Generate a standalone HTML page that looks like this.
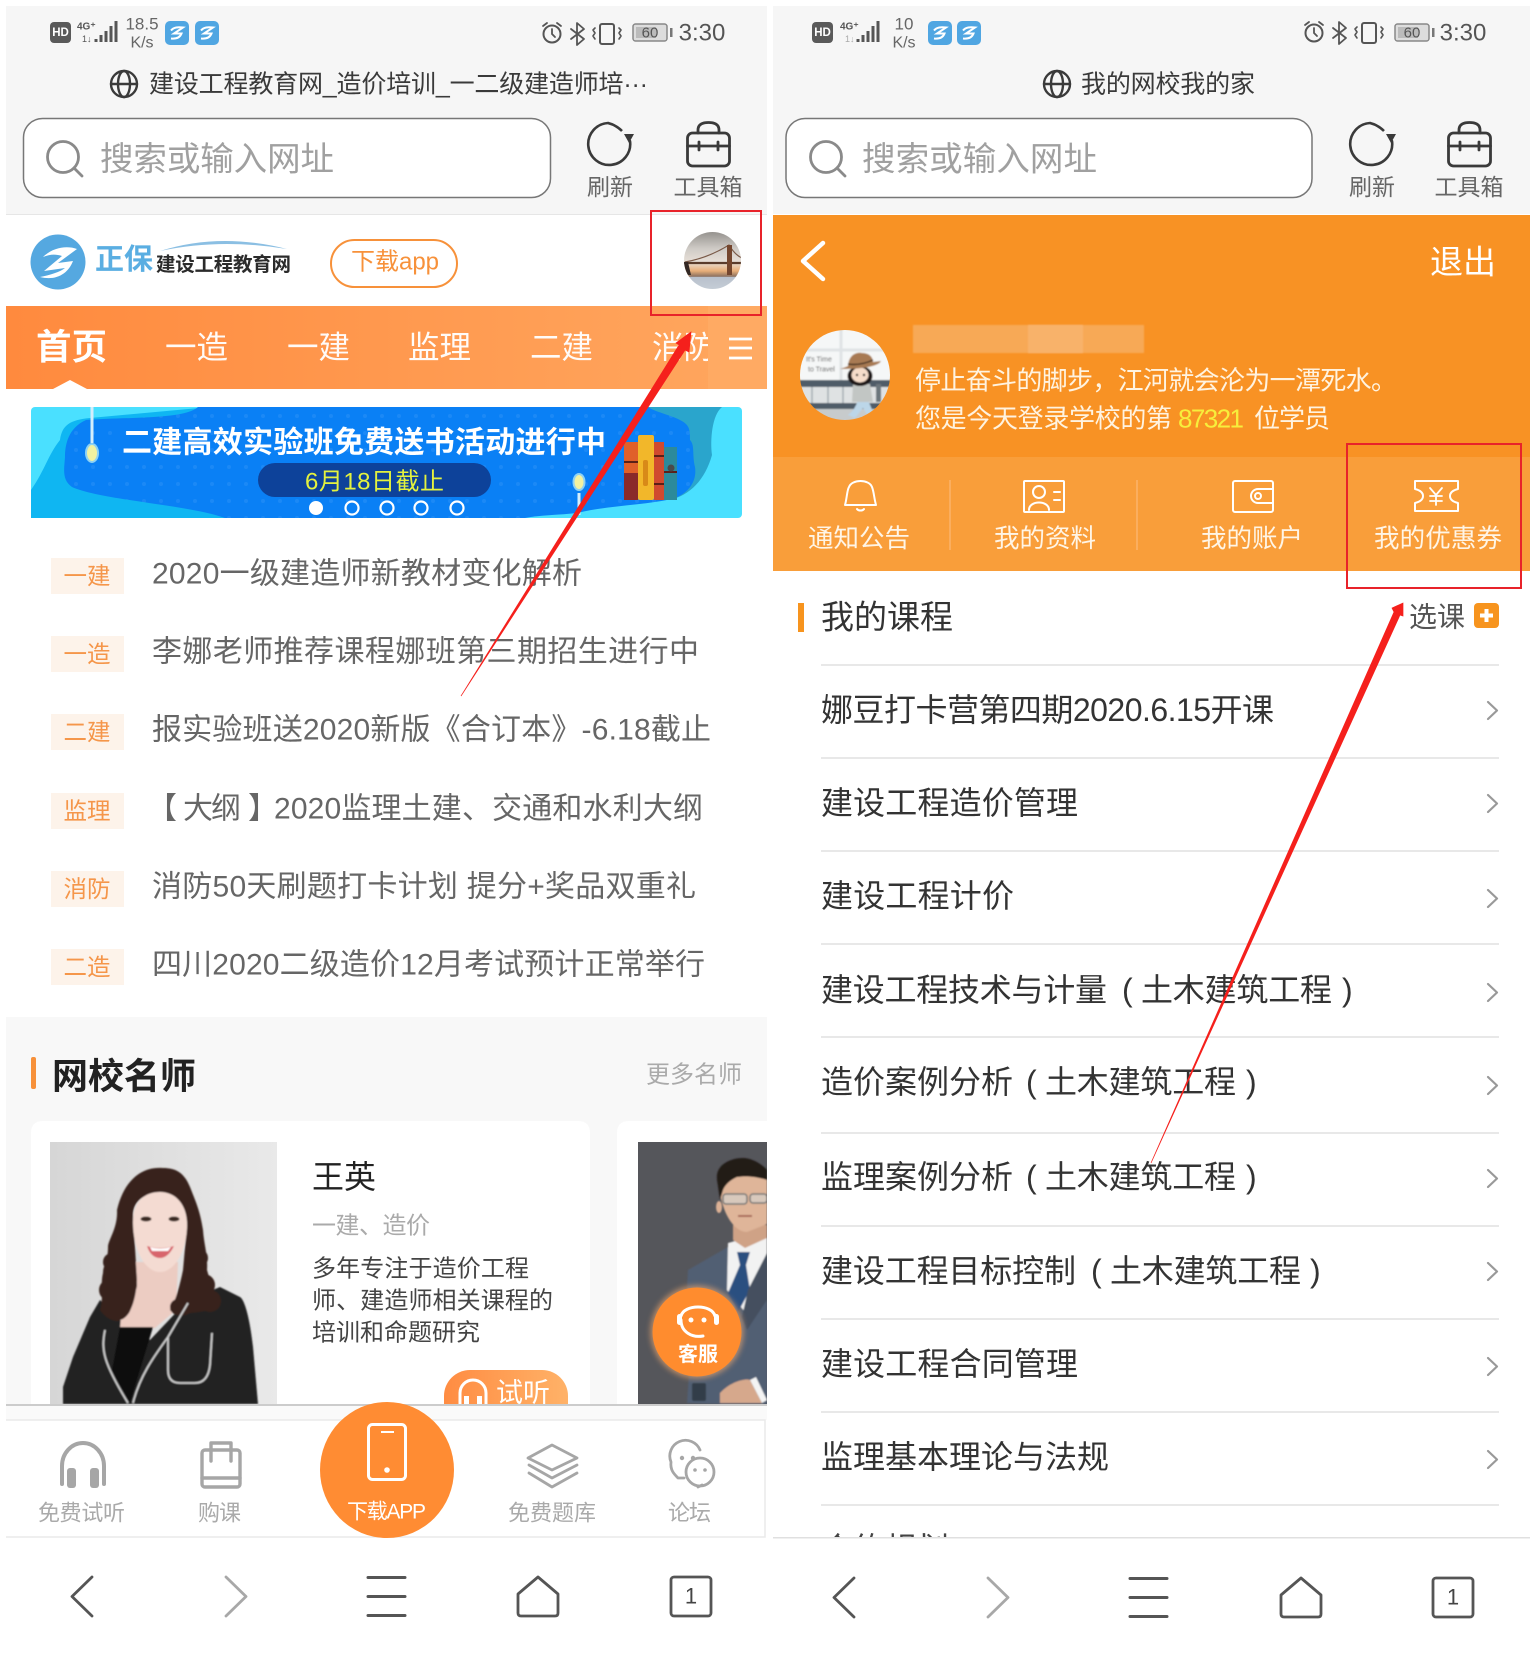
<!DOCTYPE html>
<html lang="zh-CN"><head><meta charset="utf-8"><title>建设工程教育网</title>
<style>
html,body{margin:0;padding:0;background:#fff;width:1536px;height:1663px;overflow:hidden}
svg{display:block}
text{font-family:"Liberation Sans","Noto Sans CJK SC",sans-serif;dominant-baseline:central;transform:translateY(1px)}
.c{text-anchor:middle}.b{font-weight:700}
.s{fill:none;stroke-linecap:round;stroke-linejoin:round}
</style></head><body>
<svg width="1536" height="1663" viewBox="0 0 1536 1663" xmlns="http://www.w3.org/2000/svg">
<defs>
<linearGradient id="nav" x1="0" x2="1"><stop offset="0" stop-color="#ff8a3e"/><stop offset="1" stop-color="#ffa75f"/></linearGradient>
<linearGradient id="ph" x1="0" x2="1"><stop offset="0" stop-color="#d6d6d6"/><stop offset="1" stop-color="#e9e9e9"/></linearGradient>
<linearGradient id="try" x1="0" x2="1"><stop offset="0" stop-color="#ff8c42"/><stop offset="1" stop-color="#ffb268"/></linearGradient>
<linearGradient id="sky" x1="0" x2="0" y1="0" y2="1"><stop offset="0" stop-color="#8f8c88"/><stop offset=".3" stop-color="#cfcbc6"/><stop offset=".52" stop-color="#e8e0d8"/><stop offset=".66" stop-color="#e8ae78"/><stop offset=".75" stop-color="#8a7060"/><stop offset=".76" stop-color="#b8c0cc"/><stop offset="1" stop-color="#c8d0d8"/></linearGradient>
<pattern id="dots" width="17" height="17" patternUnits="userSpaceOnUse"><circle cx="8" cy="8" r="2" fill="#fff" opacity=".07"/></pattern>
<clipPath id="pw"><rect x="51" y="1142" width="226" height="262"/></clipPath>
<clipPath id="pm"><rect x="638" y="1142" width="129" height="262"/></clipPath>
<clipPath id="av1"><circle cx="712.500" cy="260.500" r="28.500"/></clipPath>
<clipPath id="av2"><circle cx="845" cy="375" r="45"/></clipPath>
<clipPath id="rb"><rect x="773" y="1400" width="757" height="137"/></clipPath>
<clipPath id="tb"><rect x="444" y="1370" width="124" height="34"/></clipPath>
<filter id="bl"><feGaussianBlur stdDeviation=".8"/></filter>
<filter id="bl3"><feGaussianBlur stdDeviation="3"/></filter>

<g id="hd"><rect x="0" y="0" width="21" height="21" rx="4" fill="#5a5a5a"/></g>
<g id="sq"><rect width="24" height="24" rx="5" fill="#50a6e2"/><path d="M6 9.500C9 6 13 6 18 6.500L9 12.500H16.500C15 16.500 11 18 6 17.500" fill="none" stroke="#fff" stroke-width="2"/></g>
<g id="stat-r" class="s" stroke="#555">
<circle cx="11" cy="12" r="8.500" stroke-width="2"/><path d="M11 7v5l3 3M2 4l4-3M20 4l-4-3" stroke-width="1.800"/>
<path d="M30 7L43 17 36 23V1L43 7 30 17" stroke-width="1.800"/>
<rect x="59" y="2" width="14" height="20" rx="2" stroke-width="2"/><path d="M54 6l-2 2 2 3-2 3 2 3M78 6l2 2-2 3 2 3-2 3" stroke-width="1.600"/>
</g>
<g id="refresh"><path d="M20 7A21 21 0 1 0 42 25" class="s" fill="none" stroke="#3a3a3a" stroke-width="2.600"/><path d="M20 7q8 2 14 8" fill="none" stroke="#3a3a3a" stroke-width="2.600"/><path d="M36 18h10l-5 9z" fill="#3a3a3a"/></g>
<g id="box" class="s" stroke="#3a3a3a" stroke-width="2.800"><rect x="1.500" y="12" width="42" height="33" rx="5"/><path d="M12 12V9C12 3 17 1.500 22.500 1.500S33 3 33 9V12M1.500 25H43.500M13 21V29M32 21V29"/></g>
<g id="mag" class="s" stroke="#8a8a8a" stroke-width="2.800"><circle cx="16" cy="17" r="15.500"/><path d="M27 28l8 8"/></g>
<g id="globe" class="s" stroke="#3a3a3a" stroke-width="2.400"><circle cx="14" cy="14" r="13"/><ellipse cx="14" cy="14" rx="6" ry="13"/><path d="M1 14H27"/></g>
<g id="nback" class="s" stroke="#555" stroke-width="2.800"><path d="M21 1L1 20.500 21 40"/></g>
<g id="nfwd" class="s" stroke="#a8a8a8" stroke-width="2.800"><path d="M1 1L21 20.500 1 40"/></g>
<g id="nmenu" class="s" stroke="#555" stroke-width="3"><path d="M1 1.500H38M1 20.500H38M1 39.500H38"/></g>
<g id="nhome" class="s" stroke="#555" stroke-width="2.800"><path d="M21 1L41 18V37Q41 40 38 40H4Q1 40 1 37V18Z"/></g>
<g id="ntab" class="s" stroke="#555" stroke-width="2.800"><rect x="1" y="1" width="40" height="39" rx="3"/></g>
<g id="chev" class="s" stroke="#999" stroke-width="2.200"><path d="M1 2L10 10.500 1 19"/></g>
</defs>

<!-- LEFT PANEL -->
<rect x="6" y="6" width="761" height="208" fill="#f6f6f6"/>
<rect x="6" y="214" width="761" height="1" fill="#e6e6e6"/>
<use href="#hd" x="50" y="22"/><text x="60.500" y="32" class="c b" font-size="11.500" fill="#fff">HD</text>
<text x="77" y="26" font-size="10" fill="#555" font-weight="700">4G⁺</text>
<text x="82" y="38" font-size="9" fill="#555">1↓</text>
<path d="M96 42V39M101 42V35M106 42V31M111 42V26M116 42V21" stroke="#555" stroke-width="3"/>
<text x="142" y="23" class="c" font-size="17" fill="#666">18.5</text>
<text x="142" y="42" class="c" font-size="16" fill="#666">K/s</text>
<use href="#sq" x="165" y="21"/><use href="#sq" x="195" y="21"/>
<use href="#stat-r" x="541" y="22"/>
<rect x="633" y="24" width="34" height="17" rx="2.500" fill="#ddd" stroke="#888" stroke-width="1.500"/><rect x="636" y="27" width="20" height="11" fill="#bbb"/><rect x="670" y="28" width="2.500" height="9" fill="#777"/>
<text x="650" y="32" class="c" font-size="15" fill="#555">60</text>
<text x="702" y="32" class="c" font-size="24" fill="#555">3:30</text>

<use href="#globe" x="110" y="70"/>
<text x="149" y="83.500" font-size="25" fill="#3a3a3a" textLength="499">建设工程教育网_造价培训_一二级建造师培···</text>
<rect x="23.500" y="118.500" width="527" height="79" rx="19" fill="#fff" stroke="#777" stroke-width="1.500"/>
<use href="#mag" x="47" y="140"/>
<text x="100" y="159" font-size="33.500" fill="#a0a0a0" textLength="234">搜索或输入网址</text>
<use href="#refresh" x="588" y="116"/>
<text x="610" y="186" class="c" font-size="23" fill="#666">刷新</text>
<use href="#box" x="686" y="121"/>
<text x="708" y="186" class="c" font-size="23" fill="#666">工具箱</text>

<!-- logo -->
<circle cx="58" cy="262" r="27.500" fill="#55a8e0"/>
<path d="M43 257C52 248 66 245 77 249L58 263 73 261C68 274 56 281 40 277 50 275 60 272 65 268L44 271 62 256C56 254 50 254 43 257Z" fill="#fff"/>
<text x="95" y="259" class="b" font-size="29" fill="#5aaee2">正保</text>
<path d="M160 251Q220 232 287 249Q220 238 160 251Z" fill="#8bbfe3"/>
<text x="156" y="264" class="b" font-size="19.500" fill="#2b2b2b" textLength="135">建设工程教育网</text>
<rect x="331" y="240" width="126" height="47" rx="23.500" fill="#fff" stroke="#f7913a" stroke-width="2"/>
<text x="395" y="261" class="c" font-size="24" fill="#f7913a">下载app</text>

<!-- bridge avatar -->
<g clip-path="url(#av1)">
<rect x="680" y="230" width="66" height="62" fill="url(#sky)"/>
<path d="M685 262Q708 258 729 245Q735 255 742 258" fill="none" stroke="#7a5a48" stroke-width="1.200"/>
<path d="M684 263H742" stroke="#5a3c2c" stroke-width="2.200"/>
<rect x="727" y="245" width="5" height="30" fill="#74462e"/>
<path d="M684 262h4l3 13h-7z" fill="#332824"/>
</g>

<!-- nav -->
<rect x="6" y="306" width="761" height="83" fill="url(#nav)"/>
<path d="M53 389L70 380 87 389Z" fill="#fff"/>
<text x="36" y="346" class="b" font-size="35.500" fill="#fff">首页</text>
<g font-size="31.500" fill="#fff" opacity=".96">
<text x="165" y="346">一造</text><text x="287" y="346">一建</text><text x="408" y="346">监理</text><text x="530" y="346">二建</text><text x="652" y="346">消防</text>
</g>
<rect x="708" y="306" width="59" height="83" fill="#ffaa63"/>
<path d="M729 339H752M729 348H752M729 358H752" stroke="#fff" stroke-width="2.800"/>

<!-- banner -->
<rect x="31" y="407" width="711" height="111" rx="4" fill="#4ae0ff"/>
<path d="M31 518V490C45 470 48 455 60 440 62 425 70 420 90 418L210 407 240 518Z" fill="#0fb6f2"/>
<path d="M640 407H722C712 415 710 440 712 455 705 480 690 495 670 500H640Z" fill="#2aa5cc"/>
<path d="M198 407C185 420 120 417 86 420 68 428 65 445 65 457 64 470 62 480 72 487 100 500 190 505 225 518H525C540 515 560 515 577 513 610 505 650 505 675 498 690 492 697 480 695 467 692 455 695 445 690 440 690 430 690 425 680 420 668 414 655 412 648 407Z" fill="#0a80f5"/>
<path d="M198 407C185 420 120 417 86 420 68 428 65 445 65 457 64 470 62 480 72 487 100 500 190 505 225 518H525C540 515 560 515 577 513 610 505 650 505 675 498 690 492 697 480 695 467 692 455 695 445 690 440 690 430 690 425 680 420 668 414 655 412 648 407Z" fill="url(#dots)"/>
<rect x="258" y="463" width="233" height="34" rx="17" fill="#0d429a"/>
<path d="M92 407V443" stroke="#d4eefc" stroke-width="3"/><ellipse cx="92" cy="453" rx="6" ry="9" fill="#f2f2a0" stroke="#8ed2f4" stroke-width="2"/>
<path d="M579 493V515" stroke="#d4eefc" stroke-width="3"/><ellipse cx="579" cy="482" rx="5.500" ry="8" fill="#f2f2a0" stroke="#8ed2f4" stroke-width="2"/>
<text x="122" y="442" class="b" font-size="30" fill="#fff" textLength="484">二建高效实验班免费送书活动进行中</text>
<text x="305" y="481" font-size="24" fill="#e4f23e" textLength="139">6月18日截止</text>
<circle cx="316" cy="508" r="7" fill="#fff"/>
<g fill="none" stroke="#fff" stroke-width="2.200"><circle cx="352" cy="508" r="6.500"/><circle cx="387" cy="508" r="6.500"/><circle cx="421" cy="508" r="6.500"/><circle cx="457" cy="508" r="6.500"/></g>
<rect x="624" y="442" width="14" height="31" fill="#e0602a"/><rect x="624" y="473" width="14" height="27" fill="#8a2a2a"/><rect x="638" y="435" width="16" height="65" rx="2" fill="#f2b72a"/><rect x="654" y="442" width="10" height="58" fill="#d04a2f"/><rect x="664" y="447" width="13" height="53" fill="#2c8a9a"/>
<path d="M624 462H638M654 456H664M654 484H664M664 472H677" stroke="#5a2018" stroke-width="2"/><rect x="643" y="460" width="5" height="26" rx="2" fill="#d88a18"/><circle cx="671" cy="468" r="3.500" fill="#4a4a4a"/>

<!-- list -->
<g fill="#fdf3ea"><rect x="51" y="558" width="73" height="36"/><rect x="51" y="636" width="73" height="36"/><rect x="51" y="714" width="73" height="36"/><rect x="51" y="793" width="73" height="36"/><rect x="51" y="871" width="73" height="36"/><rect x="51" y="949" width="73" height="36"/></g>
<g font-size="23.500" fill="#f5964a" class="c">
<text x="87" y="575">一建</text><text x="87" y="653">一造</text><text x="87" y="731">二建</text><text x="87" y="810">监理</text><text x="87" y="888">消防</text><text x="87" y="966">二造</text>
</g>
<g font-size="30" fill="#666">
<text x="152" y="573" textLength="430">2020一级建造师新教材变化解析</text>
<text x="152" y="651" textLength="547">李娜老师推荐课程娜班第三期招生进行中</text>
<text x="152" y="729" textLength="559">报实验班送2020新版《合订本》-6.18截止</text>
<text x="147" y="808">【</text><text x="183" y="808" textLength="58">大纲</text><text x="248" y="808">】</text><text x="274" y="808" textLength="429">2020监理土建、交通和水利大纲</text>
<text x="152" y="886" textLength="544">消防50天刷题打卡计划 提分+奖品双重礼</text>
<text x="152" y="964" textLength="553">四川2020二级造价12月考试预计正常举行</text>
</g>

<!-- teachers -->
<rect x="6" y="1017" width="761" height="388" fill="#f8f8f8"/>
<rect x="31" y="1057" width="5" height="32" rx="2" fill="#f7913a"/>
<text x="52" y="1075" class="b" font-size="36" fill="#222">网校名师</text>
<text x="742" y="1074" text-anchor="end" font-size="24" fill="#aaa">更多名师</text>
<path d="M31 1404V1133Q31 1121 43 1121H578Q590 1121 590 1133V1404Z" fill="#fff"/>
<path d="M617 1404V1133Q617 1121 629 1121H767V1404Z" fill="#fff"/>

<rect x="50" y="1142" width="227" height="262" fill="url(#ph)"/>
<g clip-path="url(#pw)" filter="url(#bl)">
<path d="M100 1300L90 1317 73 1357 63 1387V1404H258L253 1347C250 1320 245 1300 240 1297L220 1287 188 1300 150 1340 120 1320Z" fill="#212121"/>
<path d="M126 1262H178L176 1310 155 1328H120Z" fill="#ecccc2"/>
<path d="M120 1327H153L130 1403 112 1370Z" fill="#0e0e0e"/>
<path d="M163 1168C142 1166 124 1180 117 1210 118 1228 108 1240 108 1247 108 1262 103 1265 103 1273 100 1285 104 1298 100 1310 108 1322 120 1322 120 1320 130 1318 136 1300 137 1280L133 1215C133 1200 146 1193 160 1193 176 1193 187 1205 187 1225L183 1270C180 1285 176 1300 170 1310 178 1318 185 1316 190 1313 205 1312 222 1308 220 1300 212 1290 210 1280 207 1270 208 1255 204 1245 203 1230 200 1210 195 1200 190 1187 184 1172 175 1168 163 1168Z" fill="#38241e"/>
<g fill="#38241e"><circle cx="112" cy="1262" r="9"/><circle cx="110" cy="1290" r="11"/><circle cx="118" cy="1306" r="13"/><circle cx="126" cy="1285" r="11"/><circle cx="199" cy="1258" r="9"/><circle cx="204" cy="1285" r="11"/><circle cx="210" cy="1301" r="11"/><circle cx="190" cy="1296" r="12"/><circle cx="178" cy="1307" r="8"/></g>
<path d="M133 1222C133 1200 146 1192 160 1192 176 1192 187 1205 187 1225 187 1250 175 1272 160 1272 145 1272 133 1250 133 1222Z" fill="#f4dbd2"/>
<ellipse cx="146" cy="1219" rx="5.500" ry="2.500" fill="#3a2a24"/><ellipse cx="174" cy="1219" rx="5.500" ry="2.500" fill="#3a2a24"/>
<path d="M147 1246Q160 1250 174 1246Q168 1258 160 1258 151 1258 147 1246Z" fill="#d8656c"/><path d="M150 1247Q160 1250 171 1247L168 1251H152Z" fill="#fff"/>
<path d="M105 1330C101 1350 103 1362 128 1403M188 1303L168 1337C155 1355 140 1375 133 1403M168 1337V1370Q168 1383 180 1383H195Q208 1383 210 1365L212 1333" fill="none" stroke="#cfcfcf" stroke-width="1.800"/>
</g>

<text x="312" y="1176" font-size="32" fill="#222">王英</text>
<text x="312" y="1225" font-size="24" fill="#aaa" textLength="118">一建、造价</text>
<g font-size="24" fill="#444">
<text x="312" y="1268" textLength="217">多年专注于造价工程</text>
<text x="312" y="1300" textLength="241">师、建造师相关课程的</text>
<text x="312" y="1332" textLength="168">培训和命题研究</text>
</g>
<g clip-path="url(#tb)">
<rect x="444" y="1370" width="124" height="60" rx="26" fill="url(#try)"/>
<path d="M460 1404V1393A13 13 0 0 1 486 1393V1404" fill="none" stroke="#fff" stroke-width="3"/><rect x="464" y="1396" width="5" height="10" fill="#fff"/><rect x="477" y="1396" width="5" height="10" fill="#fff"/>
<text x="496" y="1392" font-size="27" fill="#fff">试听</text>
</g>

<rect x="638" y="1142" width="129" height="262" fill="#55565b"/>
<g clip-path="url(#pm)" filter="url(#bl)">
<path d="M688 1270L728 1247 767 1237V1404H717L687 1403 692 1330 687 1287Z" fill="#515f73"/>
<path d="M728 1243L767 1232V1275L745 1312 727 1290Z" fill="#f2f2f2"/>
<path d="M737 1252H750L746 1265 750 1290 738 1312 728 1293 740 1265Z" fill="#2c4f80"/>
<path d="M767 1253L748 1290 742 1317 747 1330 767 1300Z" fill="#444f5f"/>
<path d="M733 1225H767V1238L745 1248 733 1240Z" fill="#cfa286"/>
<ellipse cx="719" cy="1207" rx="3" ry="6" fill="#dcb195"/>
<path d="M719 1182C719 1170 750 1168 767 1170V1224L747 1232C733 1232 720 1210 719 1182Z" fill="#dfb599"/>
<path d="M717 1180C715 1165 730 1158 743 1158 752 1158 762 1164 767 1170V1180C755 1176 745 1176 737 1177 730 1180 725 1185 723 1190L720 1200Z" fill="#211a19"/>
<rect x="723" y="1194" width="24" height="10" rx="3" fill="#d8c9bc" stroke="#777" stroke-width="1.500"/><rect x="750" y="1194" width="17" height="9" rx="3" fill="#d8c9bc" stroke="#777" stroke-width="1.500"/>
<path d="M738 1216H752" stroke="#a86a58" stroke-width="2"/>
<path d="M720 1393C730 1382 745 1378 750 1380L762 1403H720Z" fill="#d6a88c"/>
<path d="M750 1380L756 1377 767 1400 762 1403Z" fill="#f4f4f4"/>
<rect x="692" y="1383" width="14" height="18" rx="2" fill="#333d4a"/>
</g>
<circle cx="697" cy="1332" r="46.500" fill="#ffb070" opacity=".6" filter="url(#bl3)"/>
<circle cx="697" cy="1332" r="44.500" fill="#ff8c2e"/>
<g class="s" stroke="#fff" stroke-width="3"><path d="M681 1316C684 1304 712 1304 715 1316"/><path d="M681 1320C681 1332 692 1338 703 1336"/></g>
<rect x="677" y="1314" width="5" height="11" rx="2.500" fill="#fff"/><rect x="714" y="1314" width="5" height="11" rx="2.500" fill="#fff"/>
<circle cx="691" cy="1320" r="2.500" fill="#fff"/><circle cx="704" cy="1320" r="2.500" fill="#fff"/>
<text x="678" y="1354" class="b" font-size="20" fill="#fff" textLength="40">客服</text>

<!-- left tab -->
<rect x="6" y="1404" width="761" height="2" fill="#ccc"/>
<rect x="6" y="1406" width="761" height="14" fill="#fafafa"/>
<rect x="6" y="1420" width="759" height="117" fill="#fff"/>
<path d="M6 1420H765V1537H6" fill="none" stroke="#eaeaea" stroke-width="1.500"/>
<ellipse cx="387" cy="1470" rx="67" ry="68" fill="#ff8c33"/>
<rect x="368.500" y="1424.500" width="37" height="55" rx="4" fill="none" stroke="#fff" stroke-width="3"/><path d="M381 1432H394" stroke="#fff" stroke-width="2"/><circle cx="387" cy="1470" r="2.800" fill="#fff"/>
<text x="347" y="1511" font-size="21" fill="#fff" textLength="79">下载APP</text>
<g class="s" stroke="#a6a6a6" stroke-width="4"><path d="M62 1484V1466A21 23 0 0 1 104 1466V1484"/></g>
<rect x="67" y="1468" width="9" height="20" rx="3" fill="#a6a6a6"/><rect x="90" y="1468" width="9" height="20" rx="3" fill="#a6a6a6"/>
<g class="s" stroke="#a6a6a6" stroke-width="3.400"><rect x="202" y="1450" width="38" height="37" rx="3"/><path d="M211 1461V1443H231V1461M202 1478H240"/></g>
<g class="s" stroke="#a6a6a6" stroke-width="2.800"><path d="M552 1445L577 1458 552 1470 528 1458Z"/><path d="M529 1465L552 1478 577 1465M529 1473L552 1487 577 1473"/></g>
<g class="s" stroke="#a6a6a6" stroke-width="2.800"><path d="M700 1450A15 15 0 0 0 671 1462C670 1470 674 1474 678 1478L684 1478"/><circle cx="700" cy="1472" r="14"/><path d="M698 1487l4-2"/></g>
<g fill="#a6a6a6"><circle cx="682" cy="1458" r="2.200"/><circle cx="693" cy="1458" r="2.200"/><circle cx="695" cy="1470" r="1.800"/><circle cx="705" cy="1470" r="1.800"/></g>
<g font-size="22" fill="#aaa">
<text x="38" y="1512" textLength="87">免费试听</text><text x="198" y="1512" textLength="43">购课</text><text x="508" y="1512" textLength="88">免费题库</text><text x="668" y="1512" textLength="43">论坛</text>
</g>
<use href="#nback" x="71" y="1576"/><use href="#nfwd" x="225" y="1576"/><use href="#nmenu" x="367" y="1576"/><use href="#nhome" x="517" y="1576"/><use href="#ntab" x="670" y="1576"/>
<text x="691" y="1595" class="c" font-size="22" fill="#444">1</text>

<!-- RIGHT PANEL -->
<rect x="773" y="6" width="757" height="208" fill="#f6f6f6"/>
<use href="#hd" x="812" y="22"/><text x="822.500" y="32" class="c b" font-size="11.500" fill="#fff">HD</text>
<text x="840" y="26" font-size="10" fill="#555" font-weight="700">4G⁺</text>
<text x="845" y="38" font-size="9" fill="#aaa">1↓</text>
<path d="M858 42V39M863 42V35M868 42V31M873 42V26M878 42V21" stroke="#555" stroke-width="3"/>
<text x="904" y="23" class="c" font-size="17" fill="#666">10</text>
<text x="904" y="42" class="c" font-size="16" fill="#666">K/s</text>
<use href="#sq" x="928" y="21"/><use href="#sq" x="957" y="21"/>
<use href="#stat-r" x="1303" y="21"/>
<rect x="1395" y="24" width="34" height="17" rx="2.500" fill="#ddd" stroke="#888" stroke-width="1.500"/><rect x="1398" y="27" width="20" height="11" fill="#bbb"/><rect x="1432" y="28" width="2.500" height="9" fill="#777"/>
<text x="1412" y="32" class="c" font-size="15" fill="#555">60</text>
<text x="1463" y="32" class="c" font-size="24" fill="#555">3:30</text>
<use href="#globe" x="1043" y="70"/>
<text x="1081" y="83.500" font-size="25" fill="#3a3a3a" textLength="174">我的网校我的家</text>
<rect x="786" y="118.500" width="526" height="79" rx="19" fill="#fff" stroke="#777" stroke-width="1.500"/>
<use href="#mag" x="810" y="140"/>
<text x="862" y="159" font-size="33.500" fill="#a0a0a0" textLength="235">搜索或输入网址</text>
<use href="#refresh" x="1350" y="116"/>
<text x="1372" y="186" class="c" font-size="23" fill="#666">刷新</text>
<use href="#box" x="1447" y="121"/>
<text x="1469" y="186" class="c" font-size="23" fill="#666">工具箱</text>

<rect x="773" y="215" width="757" height="242" fill="#f89224"/>
<rect x="773" y="457" width="757" height="114" fill="#f99e3a"/>
<path d="M823 243L803 261 823 279" class="s" stroke="#fff" stroke-width="4.500"/>
<text x="1463" y="261" class="c" font-size="33" fill="#fff">退出</text>
<rect x="913" y="325" width="231" height="28" fill="#f7a957" filter="url(#bl)"/><rect x="1028" y="325" width="55" height="28" fill="#f8b26a" filter="url(#bl)"/>

<g clip-path="url(#av2)" filter="url(#bl)">
<rect x="798" y="328" width="94" height="94" fill="#f5f7f7"/>
<path d="M841 329V380M800 350H892" stroke="#dfe3e5" stroke-width="3"/>
<rect x="798" y="380" width="94" height="7" fill="#4f5c68"/>
<rect x="798" y="387" width="94" height="16" fill="#dfe2e3"/>
<path d="M812 387V403M828 387V403M843 387V403" stroke="#a6adb2" stroke-width="1.500"/>
<rect x="798" y="403" width="94" height="6" fill="#4f5c68"/>
<rect x="798" y="409" width="94" height="13" fill="#c7cbcc"/>
<path d="M876 384h5v18h-5z" fill="#6a747c"/>
<path d="M858 400Q855 410 848 415L855 418 863 408 868 416 873 412 868 400Z" fill="#bcd6e8"/>
<path d="M853 384H870L873 402H852Z" fill="#c2c6c4"/>
<ellipse cx="860" cy="376" rx="12.500" ry="10" fill="#1d1818"/>
<ellipse cx="860" cy="375" rx="8.500" ry="7.500" fill="#f6ddca"/>
<path d="M848 366C849 354 857 352 862 353 870 353 873 358 873 362L881 361C878 367 860 369 840 369 843 368 846 367 848 366Z" fill="#a87a52"/>
<path d="M848 364Q860 366 873 360" stroke="#443020" stroke-width="1.500" fill="none"/>
<circle cx="857" cy="375" r="1.200" fill="#222"/><circle cx="864" cy="375" r="1.200" fill="#222"/>
<text x="806" y="359" font-size="7" fill="#555">It's Time</text><text x="808" y="369" font-size="7" fill="#555">to Travel</text>
</g>

<text x="915" y="379.500" font-size="26" fill="#fff3e0" textLength="482">停止奋斗的脚步，江河就会沦为一潭死水。</text>
<text x="915" y="417.500" font-size="26" fill="#fff3e0" textLength="257">您是今天登录学校的第</text>
<text x="1178" y="417.500" font-size="26" fill="#f7ee3c" textLength="66">87321</text>
<text x="1254" y="417.500" font-size="26" fill="#fff3e0" textLength="76">位学员</text>
<g class="s" stroke="#fff" stroke-width="2"><path d="M845 505C847 498 847 490 849 487 852 479 869 479 872 487 874 492 874 498 876 505ZM845 505H876M857 509A4 3 0 0 0 864 509"/>
<rect x="1024" y="481" width="40" height="31" rx="1"/><circle cx="1039" cy="492" r="6"/><path d="M1029 510C1029 500 1049 500 1049 510M1054 492H1060M1054 500H1060"/>
<rect x="1233" y="481" width="40" height="31" rx="2"/><path d="M1273 489H1258A7 7 0 0 0 1258 503H1273"/><circle cx="1258" cy="496" r="3"/>
<path d="M1415 481H1458V489Q1450 491 1450 496 1450 501 1458 503V511H1415V503Q1423 501 1423 496 1423 491 1415 489Z"/>
<path d="M1430 488L1436 495 1442 488M1436 495V505M1430 496H1442M1430 501H1442" stroke-width="1.800"/></g>
<path d="M950 480V550M1137 480V550" stroke="#fcb46a" stroke-width="1.500"/>
<g font-size="25.500" fill="#fff5e6">
<text x="808" y="538" textLength="102">通知公告</text><text x="994" y="538" textLength="102">我的资料</text><text x="1201" y="538" textLength="102">我的账户</text><text x="1374" y="538" textLength="128">我的优惠券</text>
</g>

<rect x="798" y="603" width="6" height="29" fill="#f7941e"/>
<text x="821" y="616" font-size="33" fill="#333">我的课程</text>
<text x="1409" y="616" font-size="28" fill="#555">选课</text>
<rect x="1474" y="603" width="25" height="25" rx="4" fill="#f7941e"/><path d="M1486.500 609V622M1480 615.500H1493" stroke="#fff" stroke-width="4"/>

<g fill="#e8e8e8"><rect x="821" y="664" width="678" height="2"/><rect x="821" y="757" width="678" height="2"/><rect x="821" y="850" width="678" height="2"/><rect x="821" y="943" width="678" height="2"/><rect x="821" y="1036" width="678" height="2"/><rect x="821" y="1132" width="678" height="2"/><rect x="821" y="1225" width="678" height="2"/><rect x="821" y="1318" width="678" height="2"/><rect x="821" y="1411" width="678" height="2"/><rect x="821" y="1504" width="678" height="2"/></g>
<g font-size="32" fill="#333">
<text x="821" y="709" textLength="453">娜豆打卡营第四期2020.6.15开课</text>
<text x="821" y="802" textLength="257">建设工程造价管理</text>
<text x="821" y="895" textLength="193">建设工程计价</text>
<text x="821" y="989" textLength="286">建设工程技术与计量</text><text x="1122" y="989">(</text><text x="1141" y="989" textLength="191">土木建筑工程</text><text x="1342" y="989">)</text>
<text x="821" y="1081" textLength="192">造价案例分析</text><text x="1026" y="1081">(</text><text x="1045" y="1081" textLength="191">土木建筑工程</text><text x="1246" y="1081">)</text>
<text x="821" y="1176" textLength="192">监理案例分析</text><text x="1026" y="1176">(</text><text x="1045" y="1176" textLength="191">土木建筑工程</text><text x="1246" y="1176">)</text>
<text x="821" y="1270" textLength="255">建设工程目标控制</text><text x="1091" y="1270">(</text><text x="1110" y="1270" textLength="191">土木建筑工程</text><text x="1310" y="1270">)</text>
<text x="821" y="1363" textLength="257">建设工程合同管理</text>
<text x="821" y="1456" textLength="288">监理基本理论与法规</text>
</g>
<g clip-path="url(#rb)"><text x="821" y="1548" font-size="32" fill="#444">合约规划</text></g>
<use href="#chev" x="1487" y="700"/><use href="#chev" x="1487" y="793"/><use href="#chev" x="1487" y="888"/><use href="#chev" x="1487" y="982"/><use href="#chev" x="1487" y="1075"/><use href="#chev" x="1487" y="1168"/><use href="#chev" x="1487" y="1261"/><use href="#chev" x="1487" y="1356"/><use href="#chev" x="1487" y="1449"/>

<rect x="773" y="1537" width="757" height="126" fill="#fff"/>
<rect x="773" y="1537" width="757" height="1.500" fill="#e0e0e0"/>
<use href="#nback" x="833" y="1577"/><use href="#nfwd" x="987" y="1577"/><use href="#nmenu" x="1129" y="1577"/><use href="#nhome" x="1280" y="1577"/><use href="#ntab" x="1432" y="1577"/>
<text x="1453" y="1596" class="c" font-size="22" fill="#444">1</text>

<!-- red annotation -->
<rect x="651" y="211" width="110" height="104" fill="none" stroke="#e8232a" stroke-width="2"/>
<rect x="1347" y="444" width="174" height="144" fill="none" stroke="#e8232a" stroke-width="2"/>
<path d="M461 696L679 345 676 343 691 332 689 352 685 350Z" fill="#f5201c" stroke="#f5201c" stroke-width=".7"/>
<path d="M1151 1163L1394 612 1392 608 1403 603 1403 616 1400 615Z" fill="#f5201c" stroke="#f5201c" stroke-width=".7"/>
</svg>
</body></html>
